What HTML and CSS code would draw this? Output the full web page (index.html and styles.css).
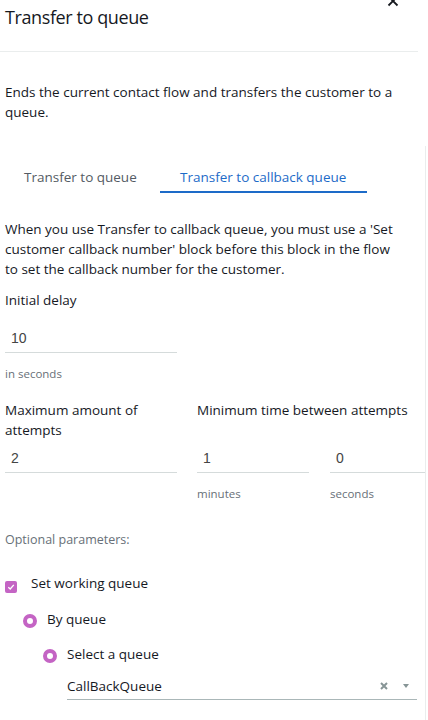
FILE: index.html
```html
<!DOCTYPE html>
<html lang="en">
<head>
<meta charset="utf-8">
<title>Transfer to queue</title>
<link rel="stylesheet" href="styles.css">
</head>
<body>
<div class="panel">
  <header class="header">
    <h1 class="title">Transfer to queue</h1>
    <button class="close" aria-label="Close">
      <svg width="12" height="12" viewBox="0 0 12 12"><path d="M1.5 1.5 L10.5 10.5 M10.5 1.5 L1.5 10.5" stroke="#16191f" stroke-width="1.8" fill="none"/></svg>
    </button>
  </header>
  <p class="desc">Ends the current contact flow and transfers the customer to a queue.</p>
  <div class="content">
    <div class="tabs">
      <div class="tab tab-first">Transfer to queue</div>
      <div class="tab tab-active">Transfer to callback queue</div>
    </div>
    <p class="info">When you use Transfer to callback queue, you must use a 'Set customer callback number' block before this block in the flow to set the callback number for the customer.</p>
    <div class="field">
      <div class="label">Initial delay</div>
      <div class="input w-172"><span class="val">10</span></div>
      <div class="hint">in seconds</div>
    </div>
    <div class="row">
      <div class="col col-1">
        <div class="label two">Maximum amount of attempts</div>
        <div class="input w-172"><span class="val">2</span></div>
      </div>
      <div class="col col-2">
        <div class="label two">Minimum time between attempts</div>
        <div class="pair">
          <div class="sub">
            <div class="input w-112"><span class="val">1</span></div>
            <div class="hint">minutes</div>
          </div>
          <div class="sub">
            <div class="input w-94"><span class="val">0</span></div>
            <div class="hint">seconds</div>
          </div>
        </div>
      </div>
    </div>
    <div class="optional">Optional parameters:</div>
    <div class="opt-row lvl-0">
      <span class="checkbox">
        <svg width="8" height="8" viewBox="0 0 8 8"><path d="M1.3 4.2 L3.2 6 L6.8 1.8" stroke="#fff" stroke-width="1.3" fill="none"/></svg>
      </span>
      <span class="opt-text">Set working queue</span>
    </div>
    <div class="opt-row lvl-1">
      <span class="radio"></span>
      <span class="opt-text">By queue</span>
    </div>
    <div class="opt-row lvl-2">
      <span class="radio"></span>
      <span class="opt-text">Select a queue</span>
    </div>
    <div class="select">
      <span class="sel-val">CallBackQueue</span>
      <span class="sel-icons">
        <svg width="8" height="8" viewBox="0 0 8 8"><path d="M1 1 L7 7 M7 1 L1 7" stroke="#879596" stroke-width="2" fill="none"/></svg>
        <svg width="8" height="6" viewBox="0 0 8 6"><path d="M1 1 L7 1 L4 5 Z" fill="#879596"/></svg>
      </span>
    </div>
  </div>
</div>
</body>
</html>
```
FILE: styles.css
```css
* { box-sizing: border-box; }
html, body { margin: 0; padding: 0; background: #fff; }
body {
  font-family: "Open Sans", "Noto Sans", sans-serif;
  color: #16191f;
  font-size: 13.5px;
  line-height: 20px;
  width: 428px;
  height: 720px;
  overflow: hidden;
}
.panel { position: relative; }
.header {
  position: relative;
  width: 418px;
  height: 52px;
  padding: 5px 0 0 5px;
  border-bottom: 1px solid #eaeded;
}
.title {
  margin: 0;
  font-size: 18px;
  line-height: 24px;
  font-weight: 400;
  letter-spacing: -0.4px;
}
.close {
  position: absolute;
  top: -5px;
  left: 387px;
  width: 12px;
  height: 12px;
  padding: 0;
  border: 0;
  background: none;
}
.close svg { display: block; }
.desc {
  margin: 30px 0 0 0;
  padding: 0 5px;
  width: 410px;
}
.content {
  margin-top: 24px;
  width: 426px;
  border-right: 1px solid #eaeded;
  padding: 21px 0 0 0;
  min-height: 600px;
}
.tabs {
  display: flex;
  padding-left: 4px;
}
.tab {
  padding: 0 20px 4px 20px;
  color: #545b64;
  border-bottom: 2px solid transparent;
  white-space: nowrap;
}
.tab-first { width: 156px; }
.tab-active {
  color: #1d6bc8;
  border-bottom-color: #1d6bc8;
  width: 207px;
}
.info {
  margin: 26px 0 0 0;
  padding: 0 5px;
  width: 405px;
}
.field { padding-left: 5px; margin-top: 11px; }
.label { line-height: 20px; }
.input {
  height: 31px;
  border-bottom: 1px solid #d5dbdb;
  padding: 6px 0 0 6px;
  margin-top: 12px;
}
.w-172 { width: 172px; }
.w-112 { width: 112px; }
.w-94 { width: 95px; }
.val {
  font-family: "Liberation Sans", Arial, sans-serif;
  color: #444;
  font-size: 14px;
}
.hint {
  margin-top: 13px;
  font-size: 11.5px;
  line-height: 16px;
  color: #687078;
}
.row {
  display: flex;
  margin-top: 18px;
  padding-left: 5px;
}
.col-1 { width: 193px; }
.two { height: 40px; }
.col .input { margin-top: 2px; }
.pair { display: flex; gap: 21px; }
.optional {
  margin-top: 30px;
  padding-left: 5px;
  font-size: 12.5px;
  line-height: 16px;
  color: #687078;
}
.opt-row {
  display: flex;
  align-items: flex-start;
  height: 20px;
  margin-top: 16px;
}
.lvl-0 { margin-top: 25px; padding-left: 5px; }
.lvl-1 { padding-left: 23px; }
.lvl-2 { padding-left: 43px; margin-top: 15px; }
.checkbox {
  width: 12px;
  height: 12px;
  margin-top: 8px;
  margin-right: 14px;
  border-radius: 2px;
  background: #c464c4;
  display: flex;
  align-items: center;
  justify-content: center;
}
.checkbox svg { display: block; }
.radio {
  width: 14px;
  height: 14px;
  margin-top: 5px;
  margin-right: 10px;
  border-radius: 50%;
  border: 4.5px solid #c464c4;
  background: #fff;
}
.select {
  margin: 8px 0 0 67px;
  width: 350px;
  height: 28px;
  border-bottom: 1px solid #aab7b8;
  display: flex;
  justify-content: space-between;
  align-items: center;
}
.sel-icons {
  display: flex;
  align-items: center;
  gap: 14px;
  padding-right: 7px;
}
.sel-icons svg { display: block; }
```
